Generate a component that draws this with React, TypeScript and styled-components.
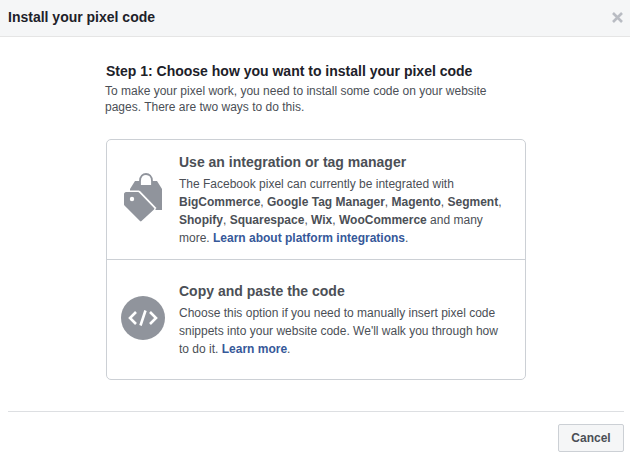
import styled, { createGlobalStyle } from 'styled-components';

const GlobalStyle = createGlobalStyle`
  html, body {
    margin: 0;
    padding: 0;
    background: #fff;
    font-family: "Liberation Sans", Arial, sans-serif;
    overflow: hidden;
  }
`;

const TagsIcon = () => (
  <svg width="39" height="50" viewBox="0 0 39 50">
    <path d="M6 20 V16 L11 8 H33 L38 16 V37 H32 L15 20 Z" fill="#90949c" />
    <path d="M16 12 V8 C16 3 19 1 22 1 C25 1 28 3 28 8 V12 Z" fill="#fff" />
    <path
      d="M16 12 V8 C16 3 19 1 22 1 C25 1 28 3 28 8 V12"
      fill="none"
      stroke="#90949c"
      strokeWidth="1.800"
    />
    <path
      d="M1.500 17.500 H14 C15 17.500 16 18 16.500 18.500 L32.500 35 L16.500 50 L0 33 V19 C0 18 0.500 17.500 1.500 17.500 Z"
      fill="#fff"
    />
    <path
      d="M2 19 H13.500 C14.500 19 15 19.500 15.500 20 L30 35 C30.500 35.500 30.500 36 30 36.500 L17.500 48 C17 48.500 16.500 48.500 16 48 L0.500 32.500 C0.200 32.200 0 31.800 0 31.500 V21 C0 20 1 19 2 19 Z"
      fill="#90949c"
    />
    <circle cx="8" cy="26" r="2.200" fill="#fff" />
  </svg>
);

const CodeIcon = () => (
  <svg width="44" height="44" viewBox="0 0 44 44">
    <circle cx="22" cy="22" r="22" fill="#90949c" />
    <path
      d="M15 16 L9 22 L15 28 M29 16 L35 22 L29 28 M24.500 14.500 L19.500 29.500"
      fill="none"
      stroke="#fff"
      strokeWidth="2.600"
    />
  </svg>
);

const CloseIcon = () => (
  <svg width="11" height="11" viewBox="0 0 11 11">
    <path d="M1 1 L10 10 M10 1 L1 10" stroke="#b9bcc3" strokeWidth="2.600" />
  </svg>
);

const App = () => (
  <>
    <GlobalStyle />
    <Dialog>
      <Header>
        <HeaderTitle>Install your pixel code</HeaderTitle>
        <CloseButton>
          <CloseIcon />
        </CloseButton>
      </Header>

      <Body>
        <StepTitle>Step 1: Choose how you want to install your pixel code</StepTitle>
        <StepText>
          To make your pixel work, you need to install some code on your website
          <br />
          pages. There are two ways to do this.
        </StepText>

        <Options>
          <Option>
            <OptionIcon>
              <TagsIcon />
            </OptionIcon>
            <div>
              <OptionTitle>Use an integration or tag manager</OptionTitle>
              <OptionText>
                The Facebook pixel can currently be integrated with
                <br />
                <b>BigCommerce</b>, <b>Google Tag Manager</b>, <b>Magento</b>, <b>Segment</b>,
                <br />
                <b>Shopify</b>, <b>Squarespace</b>, <b>Wix</b>, <b>WooCommerce</b> and many
                <br />
                more. <OptionLink>Learn about platform integrations</OptionLink>.
              </OptionText>
            </div>
          </Option>
          <Option>
            <OptionIcon>
              <CodeIcon />
            </OptionIcon>
            <div>
              <OptionTitle>Copy and paste the code</OptionTitle>
              <OptionText>
                Choose this option if you need to manually insert pixel code
                <br />
                snippets into your website code. We'll walk you through how
                <br />
                to do it. <OptionLink>Learn more</OptionLink>.
              </OptionText>
            </div>
          </Option>
        </Options>
      </Body>

      <Footer>
        <CancelButton>Cancel</CancelButton>
      </Footer>
    </Dialog>
  </>
);

const Dialog = styled.div`
  width: 630px;
  height: 459px;
  display: flex;
  flex-direction: column;
  background: #fff;
`;

const Header = styled.div`
  height: 37px;
  box-sizing: border-box;
  flex: none;
  display: flex;
  align-items: center;
  justify-content: space-between;
  padding: 0 7px 2px 8px;
  background: #f5f6f7;
  border-bottom: 1px solid #e5e5e5;
`;

const HeaderTitle = styled.h1`
  margin: 0;
  font-size: 14px;
  line-height: 16px;
  font-weight: 700;
  color: #1d2129;
`;

const CloseButton = styled.div`
  display: flex;
`;

const Body = styled.div`
  flex: 1;
  width: 421px;
  margin-left: 105px;
  padding-top: 26px;
  box-sizing: border-box;
`;

const StepTitle = styled.h2`
  margin: 0 0 0 1px;
  font-size: 14px;
  line-height: 16px;
  font-weight: 700;
  color: #1d2129;
`;

const StepText = styled.p`
  margin: 4px 0 0;
  font-size: 12px;
  line-height: 16px;
  color: #4b4f56;
`;

const Options = styled.div`
  margin: 24px 0 0 1px;
  height: 241px;
  box-sizing: border-box;
  border: 1px solid #ccd0d5;
  border-radius: 5px;
  display: flex;
  flex-direction: column;
`;

const Option = styled.div`
  flex: 1;
  display: flex;
  align-items: center;
  padding: 0 14px;
  gap: 14px;

  & + & {
    border-top: 1px solid #ccd0d5;
  }
`;

const OptionIcon = styled.div`
  width: 44px;
  margin-bottom: 3px;
  display: flex;
  justify-content: center;
  flex: none;
`;

const OptionTitle = styled.h3`
  margin: 0 0 4px;
  font-size: 14px;
  line-height: 18px;
  font-weight: 700;
  color: #4b4f56;
`;

const OptionText = styled.p`
  margin: 0;
  font-size: 12px;
  line-height: 18px;
  color: #4b4f56;
`;

const OptionLink = styled.a`
  color: #365899;
  font-weight: 700;
`;

const Footer = styled.div`
  margin: 0 6px 0 8px;
  height: 48px;
  box-sizing: border-box;
  flex: none;
  border-top: 1px solid #dddfe2;
  display: flex;
  justify-content: flex-end;
  align-items: flex-end;
  padding-bottom: 7px;
`;

const CancelButton = styled.button`
  width: 66px;
  height: 28px;
  padding: 0;
  background: #f5f6f7;
  border: 1px solid #ccd0d5;
  border-radius: 2px;
  font-family: inherit;
  font-size: 12px;
  font-weight: 700;
  color: #4b4f56;
`;

export default App;
